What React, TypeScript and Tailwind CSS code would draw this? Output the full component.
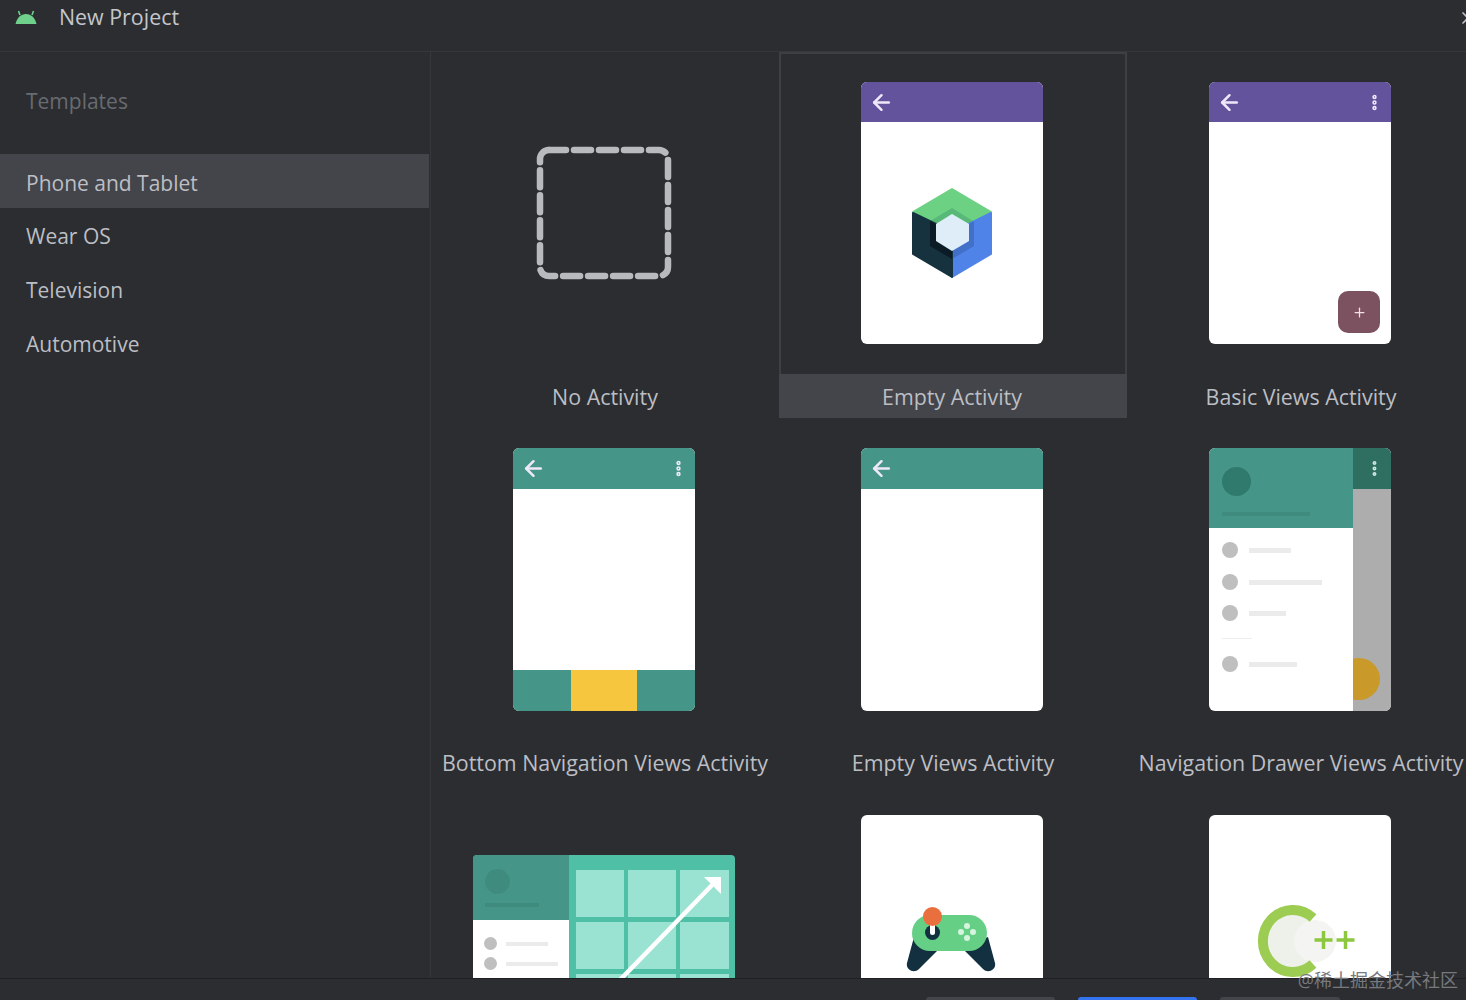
import type { ReactNode } from 'react'
import { ArrowLeft, EllipsisVertical, Plus, X } from 'lucide-react'

const categories = ['Phone and Tablet', 'Wear OS', 'Television', 'Automotive']

function AndroidIcon() {
  return (
    <svg width="22" height="15" viewBox="0 0 22 15">
      <path d="M5 5 3.500 1M17 5l1.500-4" stroke="#6fd08c" strokeWidth="1.600" fill="none" />
      <path d="M0.500 14C2 7.500 6 4 11 4s9 3.500 10.500 10z" fill="#6fd08c" />
    </svg>
  )
}

function StudioLogo() {
  return (
    <svg width="82" height="92" viewBox="0 0 82 92" strokeLinejoin="round">
      <path d="M2 25 41 2l39 23-22 12-17-10-16 10z" fill="#6dd184" stroke="#6dd184" strokeWidth="2" />
      <path d="M19 34 41 21l21 13-4 3-17-10-16 10z" fill="#58b878" />
      <path d="M80 26v41L41 90V64l17-10V37z" fill="#4f83e8" stroke="#4f83e8" strokeWidth="2" />
      <path d="M58 37l5-3v25L41 72v-8l17-10z" fill="#4270c8" />
      <path d="M2 26l23 11v17l16 10v26L2 67z" fill="#16323f" stroke="#16323f" strokeWidth="2" />
      <path d="M19 34l6 3v17l16 10v8L19 59z" fill="#0b1c26" />
      <path d="M41 27l17 10v17L41 64 25 54V37z" fill="#deedf8" />
    </svg>
  )
}

function Phone({ bar, dots, tall, children }: { bar?: string; dots?: boolean; tall?: boolean; children?: ReactNode }) {
  return (
    <div className={`relative flex w-[182px] flex-col overflow-hidden rounded-[6px] bg-white ${tall ? 'h-[263px]' : 'h-[262px]'}`}>
      {bar && (
        <div className={`flex shrink-0 items-center justify-between pl-[8px] pr-[7px] ${bar}`}>
          <ArrowLeft size={25} strokeWidth={2.4} className="text-[#efe8f8]" />
          {dots && <EllipsisVertical size={19} strokeWidth={3.6} className="text-[#efe8f8]" />}
        </div>
      )}
      {children}
    </div>
  )
}

function NoActivity() {
  return (
    <div className="flex h-[262px] w-[182px] items-center justify-center">
      <svg width="140" height="138" viewBox="0 0 140 138">
        <rect x="6" y="6" width="128" height="126" rx="9" fill="none" stroke="#b8babd" strokeWidth="6.500" strokeDasharray="17 8" strokeLinecap="round" />
      </svg>
    </div>
  )
}

function DrawerRow({ line, className }: { line: string; className: string }) {
  return (
    <div className={`flex items-center gap-[11px] ${className}`}>
      <div className="h-[16px] w-[16px] rounded-full bg-[#bfbfbf]" />
      <div className={`h-[5px] bg-[#ebebeb] ${line}`} />
    </div>
  )
}

function DrawerPhone() {
  return (
    <div className="flex h-[263px] w-[182px] overflow-hidden rounded-[6px] bg-white">
      <div className="w-[144px] shrink-0">
        <div className="h-[80px] bg-[#459688] pl-[13px] pt-[19px]">
          <div className="h-[29px] w-[29px] rounded-full bg-[#2f7a6c]" />
          <div className="mt-[16px] h-[4px] w-[88px] bg-[#3f8c7e]" />
        </div>
        <div className="pl-[13px]">
          <DrawerRow line="w-[42px]" className="mt-[14px]" />
          <DrawerRow line="w-[73px]" className="mt-[16px]" />
          <DrawerRow line="w-[37px]" className="mt-[15px]" />
          <div className="mt-[17px] h-[1px] w-[30px] bg-[#eeeeee]" />
          <DrawerRow line="w-[48px]" className="mt-[17px]" />
        </div>
      </div>
      <div className="relative flex-1 overflow-hidden bg-[#adadad]">
        <div className="flex h-[41px] items-center justify-center bg-[#2f6f62] pl-[5px]">
          <EllipsisVertical size={19} strokeWidth={3} className="text-[#cfe6df]" />
        </div>
        <div className="absolute left-[-15px] top-[210px] h-[42px] w-[42px] rounded-full bg-[#c9992a]" />
      </div>
    </div>
  )
}

function TabletRow({ line, className }: { line: string; className: string }) {
  return (
    <div className={`flex items-center gap-[9px] ${className}`}>
      <div className="h-[13px] w-[13px] rounded-full bg-[#bfbfbf]" />
      <div className={`h-[4px] bg-[#ebebeb] ${line}`} />
    </div>
  )
}

function TabletThumb() {
  return (
    <div className="relative mt-[40px] flex h-[200px] w-[262px] overflow-hidden rounded-t-[4px] bg-[#4fbfa5]">
      <div className="w-[96px] shrink-0">
        <div className="h-[65px] bg-[#459688] pl-[12px] pt-[14px]">
          <div className="h-[25px] w-[25px] rounded-full bg-[#3f8c7e]" />
          <div className="mt-[9px] h-[4px] w-[54px] bg-[#3f8c7e]" />
        </div>
        <div className="h-full bg-white pl-[11px]">
          <TabletRow line="w-[42px]" className="pt-[17px]" />
          <TabletRow line="w-[52px]" className="pt-[7px]" />
        </div>
      </div>
      <div className="grid grid-cols-[48px_48px_49px] content-start gap-x-[4px] gap-y-[5px] pl-[7px] pt-[15px]">
        {Array.from({ length: 9 }).map((_, i) => (
          <div key={i} className="h-[47px] bg-[#9ae2d2]" />
        ))}
      </div>
      <svg className="absolute left-[140px] top-[15px]" width="115" height="115" viewBox="0 0 115 115">
        <path d="M5 112 103 11" stroke="white" strokeWidth="4.500" fill="none" />
        <path d="M91 7h17v17z" fill="white" />
      </svg>
    </div>
  )
}

function GameLogo() {
  return (
    <svg className="ml-[-3px] mt-[92px]" width="90" height="66" viewBox="0 0 90 66">
      <path d="M8 30 1 56c-1.500 7 7 11 12 6l22-22zM82 30l7 26c1.500 7-7 11-12 6L55 40z" fill="#12303f" />
      <rect x="6" y="8" width="75" height="36" rx="18" fill="#66cf86" />
      <rect x="19" y="18" width="15" height="15" rx="7.500" fill="#12303f" />
      <rect x="24" y="16" width="5" height="12" rx="2.500" fill="white" />
      <circle cx="26.500" cy="9.500" r="9.500" fill="#e9703e" />
      <g fill="#d5f5df">
        <circle cx="61" cy="19" r="3" />
        <circle cx="61" cy="31" r="3" />
        <circle cx="55" cy="25" r="3" />
        <circle cx="67" cy="25" r="3" />
      </g>
    </svg>
  )
}

function CppLogo() {
  return (
    <svg className="ml-[9px] mt-[88px]" width="104" height="76" viewBox="0 0 104 76">
      <circle cx="36" cy="37" r="30" fill="#eef1ea" />
      <circle cx="62" cy="38" r="21" fill="#f4f5f2" />
      <path d="M60 15a30 31 0 1 0 0 46" stroke="#9ccc52" strokeWidth="10" fill="none" />
      <path d="M61.500 37h18M70.500 28v18M83.500 37h18M92.500 28v18" stroke="#8dc63f" strokeWidth="3.500" fill="none" />
    </svg>
  )
}

type Tile = { label?: string; selected?: boolean; thumb: ReactNode }

const tiles: Tile[] = [
  { label: 'No Activity', thumb: <NoActivity /> },
  {
    label: 'Empty Activity',
    selected: true,
    thumb: (
      <Phone bar="h-[40px] bg-[#63529c]">
        <div className="mt-[65px] flex justify-center">
          <StudioLogo />
        </div>
      </Phone>
    ),
  },
  {
    label: 'Basic Views Activity',
    thumb: (
      <Phone bar="h-[40px] bg-[#63529c]" dots>
        <div className="absolute bottom-[11px] right-[11px] flex h-[42px] w-[42px] items-center justify-center rounded-[10px] bg-[#7d5260]">
          <Plus size={15} className="text-[#f3dfe6]" />
        </div>
      </Phone>
    ),
  },
  {
    label: 'Bottom Navigation Views Activity',
    thumb: (
      <Phone bar="h-[41px] bg-[#459688]" dots tall>
        <div className="mt-auto flex h-[41px] bg-[#459688]">
          <div className="w-[58px]" />
          <div className="w-[66px] bg-[#f5c63e]" />
        </div>
      </Phone>
    ),
  },
  { label: 'Empty Views Activity', thumb: <Phone bar="h-[41px] bg-[#459688]" tall /> },
  { label: 'Navigation Drawer Views Activity', thumb: <DrawerPhone /> },
  { thumb: <TabletThumb /> },
  {
    thumb: (
      <Phone>
        <div className="flex justify-center">
          <GameLogo />
        </div>
      </Phone>
    ),
  },
  {
    thumb: (
      <Phone>
        <div className="flex justify-center">
          <CppLogo />
        </div>
      </Phone>
    ),
  },
]

export default function App() {
  return (
    <div className="relative flex h-[1000px] w-[1466px] flex-col overflow-hidden bg-[#2b2d30] font-['Open_Sans','Noto_Sans_CJK_SC',sans-serif] text-[#bcbec4]">
      <header className="flex h-[52px] shrink-0 items-center border-b border-[#35373b] pb-[16px] pl-[15px]">
        <AndroidIcon />
        <span className="ml-[22px] text-[21.4px] text-[#c4c6cc]">New Project</span>
        <X size={20} className="ml-auto mr-[-12px] text-[#bcbec4]" />
      </header>

      <div className="flex min-h-0 flex-1">
        <aside className="w-[431px] shrink-0 border-r border-[#35373b]">
          <div className="flex h-[102px] items-center pb-[3px] pl-[26px] text-[21px] text-[#686b71]">Templates</div>
          {categories.map((name, i) => (
            <div
              key={name}
              className={`mr-[1px] flex h-[53.7px] items-center pl-[26px] pt-[5px] text-[21px] ${i === 0 ? 'bg-[#43454a]' : ''}`}
            >
              {name}
            </div>
          ))}
        </aside>

        <main className="min-w-0 flex-1 overflow-hidden">
          <div className="grid w-[1044px] grid-cols-[348px_348px_348px] grid-rows-[366px_367px_367px]">
            {tiles.map((tile, i) => (
              <div
                key={i}
                className={`flex flex-col items-center pt-[30px] ${tile.selected ? 'border-x-2 border-t-2 border-[#3d3f43] !pt-[28px]' : ''}`}
              >
                <div className="mr-[2px] h-[263px]">{tile.thumb}</div>
                {tile.label && (
                  <div
                    className={`mt-[30px] flex h-[44px] items-center justify-center self-stretch whitespace-nowrap pt-[1px] text-[21.4px] ${tile.selected ? 'mx-[-2px] bg-[#43454a] pr-[2px]' : ''}`}
                  >
                    {tile.label}
                  </div>
                )}
              </div>
            ))}
          </div>
        </main>
      </div>

      <footer className="flex h-[22px] shrink-0 gap-[23px] border-t border-[#1f2023] bg-[#2b2d30] pl-[926px] pt-[18px]">
        <div className="h-[8px] w-[129px] rounded-t-[3px] bg-[#43454a]" />
        <div className="h-[8px] w-[119px] rounded-t-[3px] bg-[#3574f0]" />
        <div className="h-[8px] w-[120px] rounded-t-[3px] bg-[#43454a]" />
      </footer>

      <div className="absolute bottom-[6px] right-[8px] text-[18px] text-[#77797d]">@稀土掘金技术社区</div>
    </div>
  )
}
